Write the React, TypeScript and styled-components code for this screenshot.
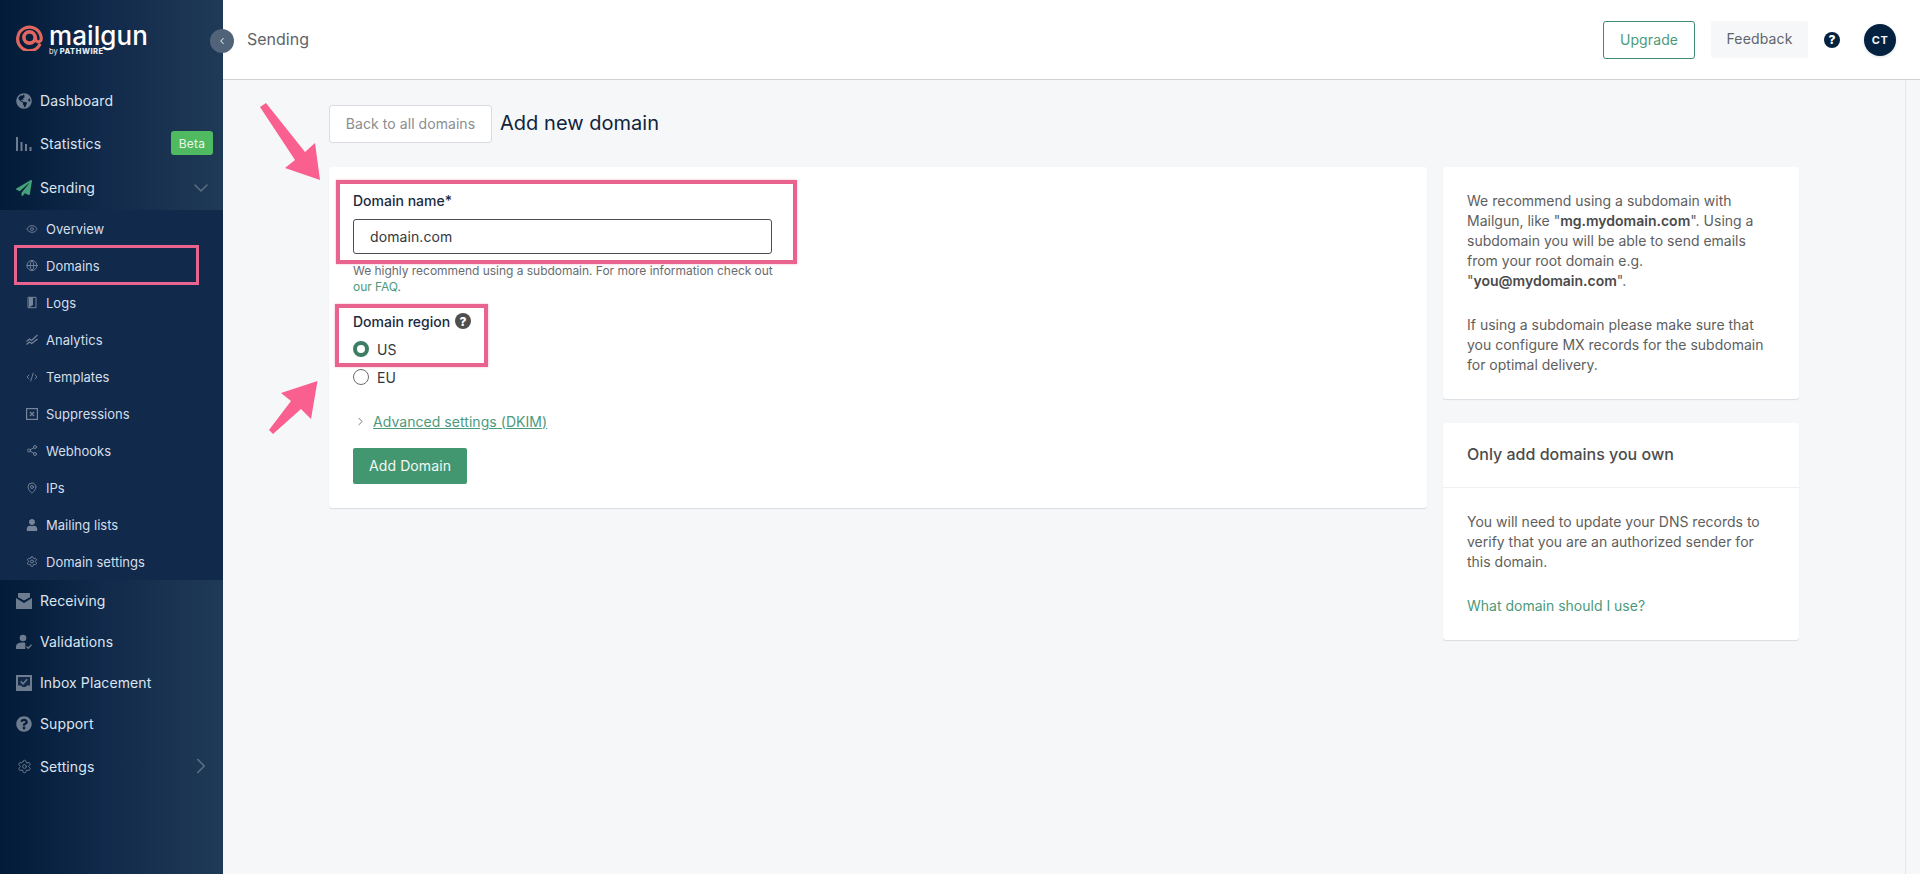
import React from "react";
import styled, { createGlobalStyle } from "styled-components";
import { Eye, Globe, CodeXml, Share2, MapPin, Settings, ChevronDown, ChevronRight, ChevronLeft } from "lucide-react";
import { FaGlobeAmericas, FaPaperPlane, FaQuestionCircle, FaUser } from "react-icons/fa";

const GlobalStyle = createGlobalStyle`
  html, body { margin: 0; padding: 0; height: 100%; background: #f5f7f9; }
  body { font-family: Inter, "Liberation Sans", sans-serif; overflow: hidden; }
  * { box-sizing: border-box; }
`;

const Page = styled.div`
  display: flex;
  height: 874px;
  width: 1920px;
  position: relative;
`;

const Sidebar = styled.nav`
  width: 223px;
  flex: none;
  background: linear-gradient(90deg, #021b38 0%, #11294a 45%, #1f3a56 100%);
  position: relative;
`;

const LogoBlock = styled.div`
  height: 79px;
  padding: 24px 0 0 16px;
  display: flex;
  gap: 6px;
`;

const LogoWords = styled.div`
  display: flex;
  flex-direction: column;
  color: #fff;
`;

const LogoName = styled.span`
  font: 500 26px/26px Inter, sans-serif;
  letter-spacing: 0.1px;
  margin-top: -1px;
`;

const LogoBy = styled.span`
  font: 800 7.5px/8px Inter, sans-serif;
  letter-spacing: 0.55px;
  margin-top: -1px;
  color: #e9edf2;
  & > i { font-style: normal; font-weight: 400; margin-right: 2px; letter-spacing: 0; }
`;

const NavRow = styled.div<{ $h?: number }>`
  height: ${(p) => p.$h ?? 41}px;
  display: flex;
  align-items: center;
  padding: 0 0 0 16px;
  gap: 8px;
  color: #dbe5f0;
  font-size: 14px;
  letter-spacing: 0.1px;
  position: relative;
`;

const NavIcon = styled.span<{ $accent?: boolean }>`
  width: 16px;
  height: 16px;
  flex: none;
  display: flex;
  align-items: center;
  justify-content: center;
  color: ${(p) => (p.$accent ? "#45a17a" : "#6d7c8e")};
`;

const SubMenu = styled.div`
  background: #11294a;
  height: 370px;
`;

const SubRow = styled.div`
  height: 37px;
  display: flex;
  align-items: center;
  padding-left: 26px;
  gap: 8px;
  color: #d3dfec;
  font-size: 13px;
  letter-spacing: 0.02px;
  position: relative;
`;

const SubIcon = styled.span`
  width: 12px;
  height: 12px;
  flex: none;
  display: flex;
  align-items: center;
  justify-content: center;
  color: #76859a;
`;

const Beta = styled.span`
  position: absolute;
  left: 171px;
  top: 9px;
  width: 42px;
  height: 24px;
  border-radius: 3px;
  background: #4fba5f;
  color: #e9f7ea;
  font-size: 12px;
  letter-spacing: 0.2px;
  display: flex;
  align-items: center;
  justify-content: center;
`;

const NavChevron = styled.span`
  position: absolute;
  left: 201px;
  top: 50%;
  transform: translate(-50%, -50%);
  display: flex;
  color: #5d6e82;
`;

const DomainsBox = styled.span`
  position: absolute;
  left: 14px;
  top: -2px;
  width: 185px;
  height: 40px;
  border: 3px solid #e8648f;
  pointer-events: none;
`;

const Collapse = styled.button`
  position: absolute;
  left: 210px;
  top: 29px;
  width: 24px;
  height: 24px;
  padding: 0;
  border: 0;
  border-radius: 50%;
  background: #516378;
  color: #dfe6ee;
  display: flex;
  align-items: center;
  justify-content: center;
  z-index: 2;
`;

const Main = styled.div`
  flex: 1;
  min-width: 0;
  display: flex;
  flex-direction: column;
`;

const TopBar = styled.header`
  height: 80px;
  flex: none;
  background: #fff;
  border-bottom: 1px solid #cfd2d5;
  display: flex;
  align-items: center;
  padding: 0 24px 0 24px;
`;

const Crumb = styled.span`
  font-size: 16px;
  color: #606468;
  letter-spacing: 0;
  margin-top: -1px;
  flex: 1;
`;

const UpgradeBtn = styled.button`
  width: 92px;
  height: 38px;
  background: #fff;
  border: 1px solid #3f8a6c;
  border-radius: 3px;
  color: #4d9a7c;
  font: 14px Inter, sans-serif;
  letter-spacing: 0.1px;
`;

const FeedbackBtn = styled.button`
  width: 97px;
  height: 37px;
  background: #f5f7f9;
  border: 0;
  border-radius: 2px;
  color: #5f646b;
  font: 14px Inter, sans-serif;
  letter-spacing: 0.15px;
  margin-left: 16px;
  margin-top: -1px;
  padding-bottom: 2px;
`;

const TopHelp = styled.span`
  margin-left: 16px;
  width: 16px;
  height: 16px;
  border-radius: 50%;
  background: #04213f;
  color: #fff;
  font-size: 12px;
  font-weight: 800;
  display: flex;
  align-items: center;
  justify-content: center;
`;

const Avatar = styled.span`
  margin-left: 24px;
  width: 32px;
  height: 32px;
  border-radius: 50%;
  background: #04213f;
  color: #f3f5f8;
  font-size: 11px;
  font-weight: 700;
  letter-spacing: 0.4px;
  display: flex;
  align-items: center;
  justify-content: center;
  box-shadow: 0 1px 3px rgba(4, 33, 63, 0.15);
`;

const Body = styled.div`
  flex: 1;
  margin-right: 14px;
  border-right: 1px solid #e4e7ea;
  padding: 25px 0 0 106px;
  position: relative;
`;

const Heading = styled.div`
  display: flex;
  align-items: center;
  gap: 8px;
  height: 38px;
`;

const BackBtn = styled.button`
  width: 163px;
  height: 38px;
  background: #fff;
  border: 1px solid #d9dce0;
  border-radius: 3px;
  color: #8a8d91;
  font: 14px Inter, sans-serif;
  letter-spacing: 0.06px;
  padding: 0 0 2px;
`;

const Title = styled.h1`
  margin: -2px 0 0;
  font-size: 20px;
  font-weight: 400;
  color: #10233c;
  letter-spacing: 0.03px;
`;

const Columns = styled.div`
  display: flex;
  gap: 16px;
  margin-top: 24px;
  align-items: flex-start;
`;

const Card = styled.section`
  background: #fff;
  border-radius: 3px;
  box-shadow: 0 1px 1px rgba(20, 30, 50, 0.12);
`;

const FormCard = styled(Card)`
  width: 1098px;
  height: 341px;
  padding: 23px 24px 24px;
`;

const Field = styled.div<{ $gap?: number }>`
  width: 419px;
  position: relative;
  margin-top: ${(p) => p.$gap ?? 0}px;
`;

const FieldLabel = styled.label`
  display: flex;
  align-items: center;
  gap: 5px;
  height: 20px;
  font-size: 14px;
  font-weight: 500;
  color: #1a2a40;
`;

const TextBox = styled.input`
  display: block;
  width: 100%;
  height: 35px;
  margin-top: 9px;
  padding: 0 16px;
  border: 1px solid #4a4f55;
  border-radius: 3px;
  font: 14px Inter, sans-serif;
  letter-spacing: 0.1px;
  color: #33373c;
  background: #fff;
`;

const Help = styled.p`
  margin: 9px 0 0;
  font-size: 12px;
  line-height: 16px;
  color: #686c71;
  white-space: nowrap;
  letter-spacing: -0.03px;
  & > a { color: #4c9a7c; text-decoration: none; }
`;

const NameMark = styled.span`
  position: absolute;
  left: -17px;
  top: -10px;
  width: 461px;
  height: 84px;
  border: 4px solid #e8648f;
  box-shadow: 0 0 2px rgba(232, 100, 143, 0.5);
  pointer-events: none;
`;

const RegionMark = styled.span`
  position: absolute;
  left: -18px;
  top: -7px;
  width: 153px;
  height: 63px;
  border: 4px solid #e8648f;
  box-shadow: 0 0 2px rgba(232, 100, 143, 0.5);
  pointer-events: none;
`;

const Hint = styled.span`
  width: 16px;
  height: 16px;
  border-radius: 50%;
  background: #4f4f4f;
  color: #fff;
  font-size: 12px;
  font-weight: 800;
  display: flex;
  align-items: center;
  justify-content: center;
`;

const RadioRow = styled.div`
  display: flex;
  align-items: center;
  gap: 8px;
  height: 20px;
  margin-top: 8px;
  font-size: 14px;
  color: #33373c;
`;

const Radio = styled.span<{ $on?: boolean }>`
  width: 16px;
  height: 16px;
  border-radius: 50%;
  background: #fff;
  border: ${(p) => (p.$on ? "4px solid #3d7d64" : "1px solid #6a6d70")};
`;

const Advanced = styled.div`
  display: flex;
  align-items: center;
  height: 20px;
  margin-top: 24px;
  padding-left: 1px;
  gap: 6px;
  color: #52605a;
  & > a {
    color: #4c9a7c;
    font-size: 14px;
    letter-spacing: 0.05px;
    text-decoration: underline;
  }
`;

const AddBtn = styled.button`
  display: block;
  width: 114px;
  height: 36px;
  margin-top: 17px;
  padding: 0 0 1px;
  background: #429770;
  border: 0;
  border-radius: 2px;
  color: #f3f8f5;
  font: 14px Inter, sans-serif;
  letter-spacing: 0.1px;
`;

const SideColumn = styled.div`
  width: 356px;
  display: flex;
  flex-direction: column;
  gap: 24px;
`;

const SideText = styled.div`
  padding: 24px 24px;
  font-size: 14px;
  line-height: 20px;
  color: #5e5e5e;
  letter-spacing: 0;
  & p { margin: 0; }
  & p + p { margin-top: 24px; }
  & b { color: #4a4a4a; font-weight: 600; }
  & a { color: #4c9a7c; text-decoration: none; }
`;

const SideHeader = styled.h2`
  margin: 0;
  height: 65px;
  padding: 0 24px 2px;
  display: flex;
  align-items: center;
  border-bottom: 1px solid #eef0f2;
  font-size: 16px;
  font-weight: 500;
  color: #4c4c4c;
  letter-spacing: 0;
`;

const Arrow = styled.svg`
  position: absolute;
  left: 0;
  top: 0;
  width: 1920px;
  height: 874px;
  pointer-events: none;
  z-index: 3;
`;

const Ring = () => (
  <svg width="27" height="27" viewBox="0 0 27 27" fill="none" stroke="#e0675f" strokeWidth="3.2">
    <path d="M23.6 21 A11.8 11.8 0 1 1 25.2 13.5 V15 a2.8 2.8 0 0 1 -5.6 0 V13.5" strokeLinecap="round" />
    <circle cx="13.5" cy="13.5" r="5.6" strokeWidth="3.6" />
  </svg>
);

const Bars = () => (
  <svg width="16" height="16" viewBox="0 0 16 16" fill="currentColor">
    <rect x="0" y="1" width="2" height="14" />
    <rect x="4.5" y="6" width="2" height="9" />
    <rect x="9" y="8" width="2" height="7" />
    <rect x="13.5" y="11" width="2" height="4" />
  </svg>
);

const OpenMail = () => (
  <svg width="16" height="16" viewBox="0 0 16 16" fill="currentColor">
    <path d="M2 0h12v4.2L8 7.6 2 4.2z" />
    <path d="M0 5l8 5 8-5v11H0z" />
  </svg>
);

const UserCheck = () => (
  <svg width="16" height="16" viewBox="0 0 16 16" fill="currentColor">
    <circle cx="7" cy="4" r="3.3" />
    <path d="M0 15v-2.5C0 10 3 8.6 6.5 8.6c1 0 2 .1 2.8.4V15z" />
    <path d="M10.5 12.5l1.8 1.8 3.2-3.6" fill="none" stroke="currentColor" strokeWidth="1.3" />
  </svg>
);

const InboxCheck = () => (
  <svg width="16" height="16" viewBox="0 0 16 16">
    <path fill="currentColor" d="M0 0h16v16H0z" />
    <path fill="#12294a" d="M2 2h12v8.5h-3L9.5 12h-3L5 10.5H2z" />
    <path d="M4.7 6.4l2.4 2.4 4-4.6" fill="none" stroke="currentColor" strokeWidth="1.5" />
  </svg>
);

const LogDoc = () => (
  <svg width="13" height="13" viewBox="0 0 12 12" fill="none" stroke="currentColor">
    <path d="M2 .8h8v10.4H2z" strokeWidth="1" />
    <path d="M3 1h4v7.5L3 11z" fill="currentColor" stroke="none" />
  </svg>
);

const ChartCheck = () => (
  <svg width="13" height="13" viewBox="0 0 12 12" fill="none" stroke="currentColor" strokeWidth="1.2">
    <path d="M.5 8l3-2.5 2 1.5L11.5 1.5" />
    <path d="M.5 11l3-2.5 2.2 1.5 5.8-4.5" />
  </svg>
);

const BoxX = () => (
  <svg width="12" height="12" viewBox="0 0 12 12" fill="none" stroke="currentColor">
    <rect x=".6" y=".6" width="10.8" height="10.8" strokeWidth="1.2" />
    <path d="M4 4l4 4M8 4l-4 4" strokeWidth="1.3" />
  </svg>
);

const subItems: [string, React.ReactNode][] = [
  ["Overview", <Eye size={14} strokeWidth={1.7} />],
  ["Domains", <Globe size={13} strokeWidth={1.9} />],
  ["Logs", <LogDoc />],
  ["Analytics", <ChartCheck />],
  ["Templates", <CodeXml size={14} strokeWidth={1.8} />],
  ["Suppressions", <BoxX />],
  ["Webhooks", <Share2 size={13} strokeWidth={1.9} />],
  ["IPs", <MapPin size={14} strokeWidth={1.9} />],
  ["Mailing lists", <FaUser size={12} />],
  ["Domain settings", <Settings size={13} strokeWidth={1.9} />],
];

export default function App() {
  return (
    <Page>
      <GlobalStyle />
      <Sidebar>
        <LogoBlock>
          <Ring />
          <LogoWords>
            <LogoName>mailgun</LogoName>
            <LogoBy><i>by</i>PATHWIRE</LogoBy>
          </LogoWords>
        </LogoBlock>
        <Collapse><ChevronLeft size={10} strokeWidth={2.5} /></Collapse>
        <NavRow $h={43}><NavIcon><FaGlobeAmericas size={16} /></NavIcon>Dashboard</NavRow>
        <NavRow $h={43}>
          <NavIcon><Bars /></NavIcon>Statistics<Beta>Beta</Beta>
        </NavRow>
        <NavRow $h={45}>
          <NavIcon $accent><FaPaperPlane size={16} /></NavIcon>Sending
          <NavChevron><ChevronDown size={24} strokeWidth={1.5} /></NavChevron>
        </NavRow>
        <SubMenu>
          {subItems.map(([label, icon]) => (
            <SubRow key={label}>
              <SubIcon>{icon}</SubIcon>
              {label}
              {label === "Domains" && <DomainsBox />}
            </SubRow>
          ))}
        </SubMenu>
        <NavRow><NavIcon><OpenMail /></NavIcon>Receiving</NavRow>
        <NavRow><NavIcon><UserCheck /></NavIcon>Validations</NavRow>
        <NavRow><NavIcon><InboxCheck /></NavIcon>Inbox Placement</NavRow>
        <NavRow><NavIcon><FaQuestionCircle size={16} /></NavIcon>Support</NavRow>
        <NavRow $h={44}>
          <NavIcon><Settings size={15} strokeWidth={1.6} /></NavIcon>Settings
          <NavChevron><ChevronRight size={26} strokeWidth={1.5} /></NavChevron>
        </NavRow>
      </Sidebar>
      <Main>
        <TopBar>
          <Crumb>Sending</Crumb>
          <UpgradeBtn>Upgrade</UpgradeBtn>
          <FeedbackBtn>Feedback</FeedbackBtn>
          <TopHelp>?</TopHelp>
          <Avatar>CT</Avatar>
        </TopBar>
        <Body>
          <Heading>
            <BackBtn>Back to all domains</BackBtn>
            <Title>Add new domain</Title>
          </Heading>
          <Columns>
            <FormCard>
              <Field>
                <NameMark />
                <FieldLabel>Domain name*</FieldLabel>
                <TextBox readOnly value="domain.com" />
                <Help>
                  We highly recommend using a subdomain. For more information check out<br />
                  <a href="#faq">our FAQ</a>.
                </Help>
              </Field>
              <Field $gap={16}>
                <RegionMark />
                <FieldLabel>Domain region <Hint>?</Hint></FieldLabel>
                <RadioRow><Radio $on />US</RadioRow>
                <RadioRow><Radio />EU</RadioRow>
              </Field>
              <Advanced>
                <ChevronRight size={13} strokeWidth={1.5} />
                <a href="#adv">Advanced settings (DKIM)</a>
              </Advanced>
              <AddBtn>Add Domain</AddBtn>
            </FormCard>
            <SideColumn>
              <Card>
                <SideText>
                  <p>
                    We recommend using a subdomain with Mailgun, like "<b>mg.mydomain.com</b>". Using a subdomain you will be able to send emails from your root domain e.g. "<b>you@mydomain.com</b>".
                  </p>
                  <p>
                    If using a subdomain please make sure that you configure MX records for the subdomain for optimal delivery.
                  </p>
                </SideText>
              </Card>
              <Card>
                <SideHeader>Only add domains you own</SideHeader>
                <SideText>
                  <p>You will need to update your DNS records to verify that you are an authorized sender for this domain.</p>
                  <p><a href="#which">What domain should I use?</a></p>
                </SideText>
              </Card>
            </SideColumn>
          </Columns>
        </Body>
      </Main>
      <Arrow viewBox="0 0 1920 874">
        <path fill="#f9608f" d="M260 107 L266 103 L305 152 L315 143 L320 180 L285 168 L295 160 Z" />
        <path fill="#f9608f" d="M269 430 L273 434 L301 409 L311 419 L317.5 381 L281 393 L291 401 Z" />
      </Arrow>
    </Page>
  );
}
